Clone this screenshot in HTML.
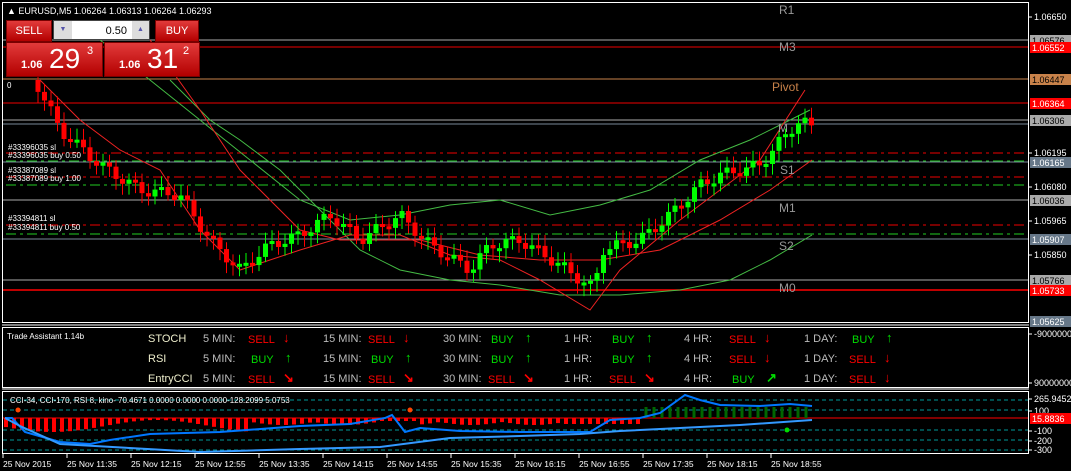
<!DOCTYPE html><html><head><meta charset="utf-8"><style>
body{margin:0;background:#000;width:1071px;height:471px;overflow:hidden;font-family:"Liberation Sans",sans-serif;}
svg text{font-family:"Liberation Sans",sans-serif}
.btn{position:absolute;background:linear-gradient(#e23a3a,#b30000);color:#fff;border:1px solid #7a0000}
</style></head><body>
<svg id="s" width="1071" height="471" style="position:absolute;left:0;top:0">
<g fill="none">
<rect x="2.5" y="2.5" width="1026" height="320" stroke="#fff"/>
<line x1="2" y1="325" x2="1029" y2="325" stroke="#fff"/>
<rect x="2.5" y="327.5" width="1026" height="60" stroke="#fff"/>
<line x1="2" y1="389" x2="1029" y2="389" stroke="#fff"/>
<rect x="2.5" y="391.5" width="1026" height="62" stroke="#fff"/>
<line x1="3" y1="40" x2="1028" y2="40" stroke="#aaa"/>
<line x1="3" y1="47" x2="1028" y2="47" stroke="#e00"/>
<line x1="3" y1="79" x2="1028" y2="79" stroke="#c8824a"/>
<line x1="3" y1="103" x2="1028" y2="103" stroke="#e00"/>
<line x1="3" y1="120" x2="1028" y2="120" stroke="#aaa"/>
<line x1="3" y1="124" x2="1028" y2="124" stroke="#789"/>
<line x1="6" y1="153" x2="1028" y2="153" stroke="#e00" stroke-dasharray="10,4,3,4"/>
<line x1="6" y1="161" x2="1028" y2="161" stroke="#2c2" stroke-dasharray="10,4,3,4"/>
<line x1="3" y1="162" x2="1028" y2="162" stroke="#789"/>
<line x1="6" y1="177" x2="1028" y2="177" stroke="#e00" stroke-dasharray="10,4,3,4"/>
<line x1="6" y1="185" x2="1028" y2="185" stroke="#2c2" stroke-dasharray="10,4,3,4"/>
<line x1="3" y1="200" x2="1028" y2="200" stroke="#aaa"/>
<line x1="6" y1="225" x2="1028" y2="225" stroke="#e00" stroke-dasharray="10,4,3,4"/>
<line x1="6" y1="234" x2="1028" y2="234" stroke="#2c2" stroke-dasharray="10,4,3,4"/>
<line x1="3" y1="239" x2="1028" y2="239" stroke="#789"/>
<line x1="3" y1="280" x2="1028" y2="280" stroke="#aaa"/>
<line x1="3" y1="290" x2="1028" y2="290" stroke="#f00" stroke-width="1.5"/>
<g stroke="#099" stroke-dasharray="4,3"><line x1="3" y1="400" x2="1028" y2="400"/><line x1="3" y1="410" x2="1028" y2="410"/><line x1="3" y1="430" x2="1028" y2="430"/><line x1="3" y1="440" x2="1028" y2="440"/><line x1="3" y1="450" x2="1028" y2="450"/></g>
<line x1="3" y1="418" x2="1028" y2="418" stroke="#f00"/>
<polyline stroke="#4b4" points="100,40 150,80 200,120 250,160 300,200 350,220 400,215 450,205 500,200 550,215 600,205 650,190 700,160 750,140 810,110"/>
<polyline stroke="#4b4" points="170,80 210,120 240,140 280,170 320,210 360,250 400,270 450,280 500,285 560,295 620,295 680,290 730,280 770,260 812,235"/>
<polyline stroke="#e22" points="40,80 80,120 120,150 160,170 200,230 240,270 300,250 350,235 400,235 450,255 500,260 540,280 590,310 620,270 680,220 720,190 760,160 805,90"/>
<polyline stroke="#e22" points="150,40 200,110 240,170 300,230 340,240 420,240 480,255 540,260 600,260 660,250 720,220 770,190 812,160"/>
</g>
<g id="c"></g>
<g fill="none">
<polyline stroke="#07f" stroke-width="2" points="5,418 12,418 25,432 60,442 90,444 110,440 150,434 220,432 300,426 350,424 385,418 392,415 405,432 420,428 460,431 520,432 590,432 610,420 640,418 660,413 685,395 700,400 720,405 760,406 790,404 812,406"/>
<polyline stroke="#39f" stroke-width="2" points="5,418 20,426 60,444 130,448 200,452 300,449 380,447 450,438 520,436 580,434 620,431 680,428 740,425 812,420"/>
<circle cx="18" cy="410" r="2.5" fill="#f40"/><circle cx="410" cy="410" r="2.5" fill="#f40"/><circle cx="787" cy="430" r="2.5" fill="#0d0"/>
</g>
<g font-size="12" fill="#999"><text x="779" y="14">R1</text><text x="779" y="51">M3</text><text x="772" y="91" fill="#c8824a">Pivot</text><text x="778" y="132">M</text><text x="780" y="174">S1</text><text x="779" y="212">M1</text><text x="779" y="250">S2</text><text x="779" y="292">M0</text></g>
<g font-size="8" fill="#fff"><text x="8" y="150">#33396035 sl</text><text x="8" y="158">#33396035 buy 0.50</text><text x="8" y="173">#33387089 sl</text><text x="8" y="181">#33387089 buy 1.00</text><text x="8" y="221">#33394811 sl</text><text x="8" y="230">#33394811 buy 0.50</text><text x="7" y="88">0</text>
<text x="7" y="339">Trade Assistant 1.14b</text><text x="10" y="403">CCI-34, CCI-170, RSI 8, kino- 70.4671 0.0000 0.0000 0.0000-128.2099 5.0753</text></g>
<g font-size="9" fill="#fff" id="ax"></g>
<g font-size="11" id="ta"></g>
<g font-size="8.5" fill="#fff" id="tm"></g>
<text x="7" y="14" font-size="9" fill="#fff">▲ EURUSD,M5  1.06264 1.06313 1.06264 1.06293</text>
</svg>
<div class="btn" style="left:6px;top:20px;width:44px;height:20px;font-size:11px;text-align:center;line-height:20px">SELL</div>
<div style="position:absolute;left:53px;top:20px;width:97px;height:20px;background:#fff;border:1px solid #444;font-size:11px;line-height:20px;text-align:right;box-sizing:border-box;padding-right:22px">0.50</div>
<div style="position:absolute;left:54px;top:21px;width:18px;height:18px;background:#ddd;font-size:7px;color:#55a;text-align:center;line-height:18px">▼</div>
<div style="position:absolute;left:132px;top:21px;width:17px;height:18px;background:#ddd;font-size:7px;color:#55a;text-align:center;line-height:18px">▲</div>
<div class="btn" style="left:155px;top:20px;width:42px;height:20px;font-size:11px;text-align:center;line-height:20px">BUY</div>
<div class="btn" style="left:6px;top:42px;width:95px;height:33px"><span style="position:absolute;left:14px;top:16px;font-size:11px;font-weight:bold">1.06</span><span style="position:absolute;left:42px;top:0;font-size:28px">29</span><span style="position:absolute;left:80px;top:2px;font-size:11px">3</span></div>
<div class="btn" style="left:104px;top:42px;width:94px;height:33px"><span style="position:absolute;left:14px;top:16px;font-size:11px;font-weight:bold">1.06</span><span style="position:absolute;left:42px;top:0;font-size:28px">31</span><span style="position:absolute;left:78px;top:2px;font-size:11px">2</span></div>
<script>
var N="http://www.w3.org/2000/svg";
function el(p,t,a,txt){var e=document.createElementNS(N,t);for(var k in a)e.setAttribute(k,a[k]);if(txt)e.textContent=txt;document.getElementById(p).appendChild(e);return e;}
var P=[[35,80],[60,130],[100,165],[140,190],[180,195],[210,240],[240,270],[270,245],[300,235],[330,215],[360,240],[400,215],[430,245],[470,270],[490,245],[520,240],[560,265],[595,290],[600,250],[640,240],[670,215],[700,185],[720,175],[760,165],[790,130],[800,120],[812,128]];
function f(x){for(var i=1;i<P.length;i++)if(x<=P[i][0]){var a=P[i-1],b=P[i];return a[1]+(b[1]-a[1])*(x-a[0])/(b[0]-a[0]);}return 128;}
var prev=f(35);
for(var x=38;x<=812;x+=6.5){var c=f(x)+Math.sin(x*1.7)*6,o=prev;var col=c<o?"#0f0":"#f00";var t=Math.min(o,c),b=Math.max(o,c);if(b-t<3)b=t+3;
el("c","line",{x1:x,y1:t-5-Math.abs(Math.sin(x))*6,x2:x,y2:b+5+Math.abs(Math.cos(x))*6,stroke:col});
el("c","rect",{x:x-2.5,y:t,width:5,height:b-t,fill:col});prev=c;}
for(var x=6;x<=812;x+=8){
if(x<640){var h=x<250?8+6*Math.sin(x*0.03):(x<560?4+3*Math.abs(Math.sin(x*0.05)):6);
if(x>380&&x<420)h=3;el("c","rect",{x:x-2,y:418,width:4,height:h,fill:"#f00"});}
else el("c","rect",{x:x-1.5,y:407,width:3,height:11,fill:"#060"});}
var ax=[[17,"1.06650"],[153,"1.06195"],[187,"1.06080"],[221,"1.05965"],[255,"1.05850"],[334,"-9000000"],[383,"90000000"],[411,"100"],[431,"-100"],[441,"-200"],[450,"-300"],[399,"265.9452"]];
ax.forEach(function(a){el("ax","line",{x1:1029,y1:a[0],x2:1032,y2:a[0],stroke:"#fff"});el("ax","text",{x:1034,y:a[0]+3},a[1]);});
[[40,"1.06576","#aaa","#000"],[47,"1.06552","#f00","#fff"],[79,"1.06447","#c8824a","#000"],[103,"1.06364","#f00","#fff"],[120,"1.06306","#aaa","#000"],[162,"1.06165","#678","#fff"],[200,"1.06036","#aaa","#000"],[239,"1.05907","#678","#fff"],[280,"1.05766","#aaa","#000"],[290,"1.05733","#f00","#fff"],[321,"1.05625","#678","#fff"],[418,"15.8836","#f00","#fff"]].forEach(function(a){el("ax","rect",{x:1030,y:a[0]-5,width:41,height:11,fill:a[2]});el("ax","text",{x:1032,y:a[0]+4,fill:a[3]},a[1]);});
var rows=[["STOCH",338,["S↓","S↓","B↑","B↑","S↓","B↑"]],["RSI",358,["B↑","B↑","B↑","B↑","S↓","S↓"]],["EntryCCI",378,["S↘","S↘","S↘","S↘","B↗","S↓"]]];
var cols=[[203,"5 MIN:"],[323,"15 MIN:"],[443,"30 MIN:"],[564,"1 HR:"],[684,"4 HR:"],[804,"1 DAY:"]];
rows.forEach(function(r){el("ta","text",{x:148,y:r[1]+4,fill:"#eec"},r[0]);cols.forEach(function(c,i){el("ta","text",{x:c[0],y:r[1]+4,fill:"#bbb"},c[1]);var v=r[2][i],b=v[0]=="B";var xx=c[0]+(b?48:45);el("ta","text",{x:xx,y:r[1]+5,fill:b?"#0d0":"#f00"},b?"BUY":"SELL");el("ta","text",{x:xx+(b?34:35),y:r[1]+4,fill:b?"#0d0":"#f00","font-weight":"bold","font-size":"13"},v[1]);});});
var tl=["25 Nov 2015","25 Nov 11:35","25 Nov 12:15","25 Nov 12:55","25 Nov 13:35","25 Nov 14:15","25 Nov 14:55","25 Nov 15:35","25 Nov 16:15","25 Nov 16:55","25 Nov 17:35","25 Nov 18:15","25 Nov 18:55"];
tl.forEach(function(t,i){var x=3+i*64;el("tm","line",{x1:x,y1:454,x2:x,y2:458,stroke:"#fff"});el("tm","text",{x:x,y:467},t);});
</script>
</body></html>
